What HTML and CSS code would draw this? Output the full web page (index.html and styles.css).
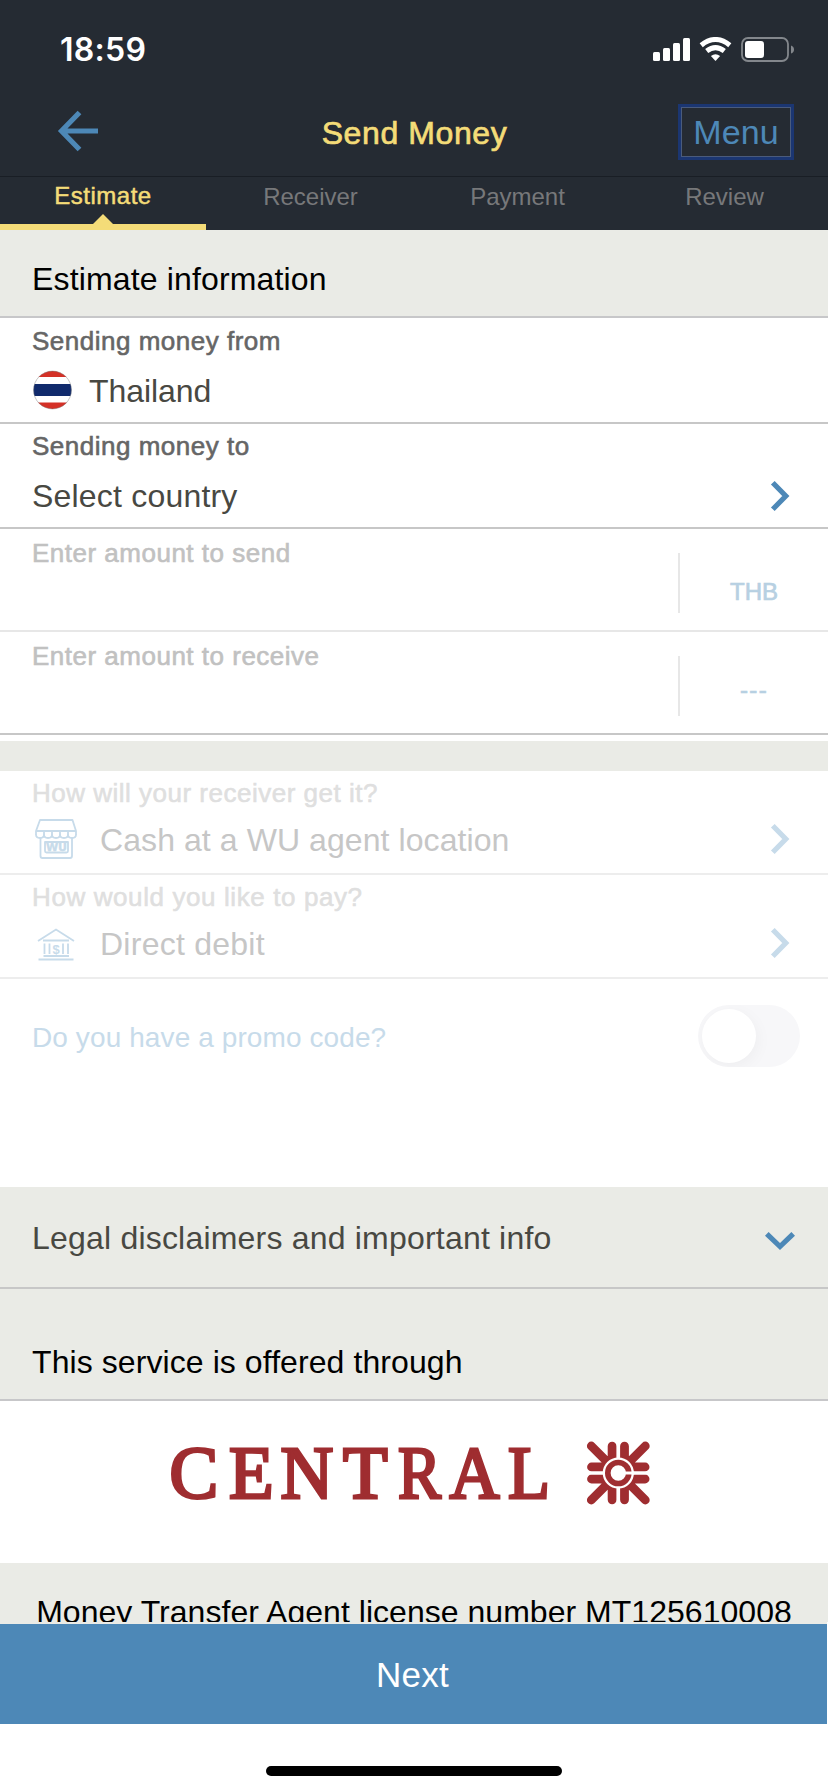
FILE: index.html
```html
<!DOCTYPE html>
<html lang="en">
<head>
<meta charset="utf-8">
<title>Send Money</title>
<link rel="stylesheet" href="styles.css">
</head>
<body>
<div class="screen">
  <header class="header">
    <div class="statusbar">
      <span class="clock">18:59</span>
      <svg class="status-icons" width="142" height="26" viewBox="0 0 142 26">
        <g fill="#fff">
          <rect x="0" y="15" width="7" height="9" rx="1.5"/>
          <rect x="10" y="11" width="7" height="13" rx="1.5"/>
          <rect x="20" y="6" width="7" height="18" rx="1.5"/>
          <rect x="30" y="1" width="7" height="23" rx="1.5"/>
        </g>
        <g fill="none" stroke="#fff" stroke-width="5">
          <path d="M48.200 8.200Q62.500 -3.200 76.800 8.200"/>
          <path d="M53.700 14Q62.500 7.200 71.300 14"/>
        </g>
        <path fill="#fff" d="M57.900 19Q62.500 15.600 67.100 19L62.500 24z"/>
        <rect x="89" y="1" width="46" height="23" rx="6" fill="none" stroke="#83878c" stroke-width="1.8"/>
        <rect x="92" y="4" width="19" height="17" rx="3" fill="#fff"/>
        <path fill="#83878c" d="M138 8.500q3 1 3 4t-3 4z"/>
      </svg>
    </div>
    <div class="navbar">
      <svg class="back" width="42" height="42" viewBox="0 0 42 42"><path d="M22.500 2.500L4.500 21L22.500 39.500M5 21H41" fill="none" stroke="#4d88b7" stroke-width="5.200"/></svg>
      <h1 class="title">Send Money</h1>
      <button class="menu">Menu</button>
    </div>
    <nav class="tabs">
      <span class="tab active">Estimate</span>
      <span class="tab">Receiver</span>
      <span class="tab">Payment</span>
      <span class="tab">Review</span>
    </nav>
  </header>

  <main class="content">
    <h2 class="section">Estimate information</h2>
    <div class="row from">
      <div class="label">Sending money from</div>
      <div class="value">
        <svg class="flag" width="39" height="40" viewBox="0 0 39 40">
          <clipPath id="disc"><circle cx="19.500" cy="20" r="19"/></clipPath>
          <g clip-path="url(#disc)">
            <rect width="39" height="40" fill="#fff"/>
            <rect width="39" height="7" fill="#d43127"/>
            <rect y="14" width="39" height="12" fill="#102a6c"/>
            <rect y="32.500" width="39" height="8" fill="#d43127"/>
          </g>
          <circle cx="19.500" cy="20" r="18.900" fill="none" stroke="#777" stroke-opacity=".55" stroke-width=".8"/>
        </svg>
        <span>Thailand</span>
      </div>
    </div>
    <div class="row to">
      <div class="label">Sending money to</div>
      <div class="value"><span>Select country</span>
        <svg class="chevron" width="20" height="32" viewBox="0 0 20 32"><path d="M2.800 2.800L15.800 16L2.800 29.200"/></svg>
      </div>
    </div>
    <div class="row amount">
      <div class="label">Enter amount to send</div>
      <div class="currency">THB</div>
    </div>
    <div class="row amount last">
      <div class="label">Enter amount to receive</div>
      <div class="currency none">---</div>
    </div>
    <div class="divider"></div>
    <div class="row option">
      <div class="label">How will your receiver get it?</div>
      <div class="value">
        <svg class="icon" width="44" height="42" viewBox="0 0 44 42" fill="none" stroke="#c7dbea" stroke-width="1.800" stroke-linejoin="round">
          <path d="M6 2H38.500L42 13H2zM2 13V17M42 13V17M10 13V17M18 13V17M26 13V17M34 13V17"/>
          <path d="M2 16.500q0 3.500 4 3.500t4-3.500q0 3.500 4 3.500t4-3.500q0 3.500 4 3.500t4-3.500q0 3.500 4 3.500t4-3.500q0 3.500 4 3.500t4-3.500"/>
          <path d="M6.500 20V38q0 2 2 2H36q2 0 2-2V20"/>
          <path d="M11 24H34V33q0 1.500-1.500 1.500H12.500Q11 34.500 11 33z"/>
          <text x="22.500" y="33" text-anchor="middle" class="sign">WU</text>
        </svg>
        <span>Cash at a WU agent location</span>
        <svg class="chevron" width="20" height="32" viewBox="0 0 20 32"><path d="M2.800 2.800L15.800 16L2.800 29.200"/></svg>
      </div>
    </div>
    <div class="row option">
      <div class="label pay">How would you like to pay?</div>
      <div class="value">
        <svg class="icon" width="44" height="42" viewBox="0 0 44 42" fill="none" stroke="#c7dbea" stroke-width="1.800">
          <path d="M4 19L22 7.500L40 19M9 18.500H35M10.500 21.500V32M15.500 21.500V32M29 21.500V32M34 21.500V32M9.500 34H35M4.500 37.500H39.500"/>
          <text x="22.200" y="31.500" text-anchor="middle" class="dollar">$</text>
        </svg>
        <span class="debit">Direct debit</span>
        <svg class="chevron" width="20" height="32" viewBox="0 0 20 32"><path d="M2.800 2.800L15.800 16L2.800 29.200"/></svg>
      </div>
    </div>
    <div class="promo">
      <span>Do you have a promo code?</span>
      <span class="toggle"><span class="knob"></span></span>
    </div>
    <div class="legal">
      <span>Legal disclaimers and important info</span>
      <svg class="chevron" width="32" height="20" viewBox="0 0 32 20"><path d="M2.800 2.800L16 15.500L29.200 2.800"/></svg>
    </div>
    <h2 class="section offered">This service is offered through</h2>
    <div class="partner">
      <svg width="828" height="162" viewBox="0 0 828 162">
        <text class="wordmark" y="96.500"><tspan x="169.500 229 280.500 343">CENT</tspan><tspan x="398" textLength="43" lengthAdjust="spacingAndGlyphs">R</tspan><tspan x="449.500" textLength="50" lengthAdjust="spacingAndGlyphs">A</tspan><tspan x="508" textLength="42" lengthAdjust="spacingAndGlyphs">L</tspan></text>
        <g transform="translate(618.3 72)">
          <g stroke="#9f2d30" stroke-width="8.800" stroke-linecap="round">
            <path d="M-6.200 -26.800V26.800M6.200 -26.800V26.800M-26.800 -6H26.800M-26.800 6H26.800M-27 -27L27 27M27 -27L-27 27"/>
          </g>
          <path d="M0 -31V31M-31 0H31" stroke="#fff" stroke-width="3"/>
          <circle r="15.600" fill="#fff"/>
          <circle r="10.500" fill="none" stroke="#9f2d30" stroke-width="5.600"/>
          <path d="M6 0H16" stroke="#fff" stroke-width="3"/>
        </g>
      </svg>
    </div>
    <div class="license">Money Transfer Agent license number MT125610008</div>
  </main>

  <button class="next">Next</button>
  <footer class="home"><div class="home-bar"></div></footer>
</div>
</body>
</html>
```
FILE: styles.css
```css
* { box-sizing: border-box; }
body {
  margin: 0;
  background: #fff;
  font-family: "Liberation Sans", Arial, sans-serif;
}
button { font-family: inherit; padding: 0; margin: 0; border: 0; background: none; }
h1, h2 { margin: 0; font-weight: 400; }
svg { display: block; flex: none; }

.screen {
  width: 828px;
  height: 1792px;
  display: flex;
  flex-direction: column;
  overflow: hidden;
}

.header { height: 230px; background: #252b33; flex: none; }
.statusbar {
  height: 100px;
  padding: 30px 33px 0 60px;
  display: flex;
  justify-content: space-between;
}
.clock {
  font: 600 32px/40px Inter, sans-serif;
  letter-spacing: .3px;
  color: #fff;
}
.status-icons { margin-top: 7px; }
.navbar {
  height: 77px;
  padding: 4px 34px 0 57px;
  display: grid;
  grid-template-columns: 200px 1fr 200px;
  border-bottom: 1px solid #191e25;
}
.back { margin-top: 6px; }
.title {
  margin-top: 9px;
  font-size: 32px;
  line-height: 40px;
  letter-spacing: .6px;
  color: #f4dc78;
  -webkit-text-stroke: .7px #f4dc78;
  text-align: center;
  padding-right: 22px;
}
.menu {
  justify-self: end;
  width: 116px;
  height: 56px;
  border: 3px solid #1b3672;
  box-shadow: inset 0 0 0 1px #4a5b7c;
  font-size: 34px;
  line-height: 40px;
  letter-spacing: .1px;
  color: #4d88b7;
}
.tabs { display: grid; grid-template-columns: repeat(4, 1fr); height: 53px; }
.tab {
  padding-top: 5px;
  font-size: 24px;
  line-height: 30px;
  color: #77787a;
  text-align: center;
}
.tab.active {
  position: relative;
  margin-right: 1px;
  padding-top: 4px;
  letter-spacing: .5px;
  color: #f4dc78;
  -webkit-text-stroke: .5px #f4dc78;
  border-bottom: 6px solid #f4dc78;
}
.tab.active::after {
  content: "";
  position: absolute;
  left: 93px;
  bottom: 0;
  border: 10px solid transparent;
  border-top: 0;
  border-bottom-color: #f4dc78;
}

.content { height: 1392px; overflow: hidden; background: #eaebe6; flex: none; }
.section {
  height: 88px;
  padding: 29px 32px 0;
  border-bottom: 2px solid #c7c7c9;
  font-size: 32px;
  line-height: 40px;
  letter-spacing: .15px;
  color: #000;
}
.row {
  background: #fff;
  padding: 6px 32px 0;
  border-bottom: 2px solid #c7c7c7;
}
.label {
  font-size: 26px;
  line-height: 32px;
  letter-spacing: .5px;
  color: #666;
  -webkit-text-stroke: .6px currentColor;
}
.value {
  display: flex;
  align-items: center;
  height: 40px;
  margin-top: 14px;
  font-size: 32px;
  line-height: 40px;
  letter-spacing: .2px;
  color: #484842;
}
.from { height: 106px; padding-top: 7px; }
.to { height: 105px; }
.flag { margin: -2px 17px 0 1px; }
.from .value { letter-spacing: -.05px; }
.chevron { margin-left: auto; margin-right: 6px; }
.chevron path { fill: none; stroke: #4d88b7; stroke-width: 5.2; }

.amount {
  height: 103px;
  padding: 8px 0 0 32px;
  display: flex;
  justify-content: space-between;
  border-bottom-color: #e7e7e7;
}
.amount .label { color: #c1c1c1; }
.currency {
  width: 150px;
  height: 60px;
  margin-top: 16px;
  padding-top: 24px;
  border-left: 2px solid #e7e7e7;
  font-size: 24px;
  line-height: 30px;
  text-align: center;
  color: #b7d0e2;
  -webkit-text-stroke: .7px #b7d0e2;
}
.currency.none { padding-top: 19px; letter-spacing: 1.3px; }
.amount.last { border-bottom-color: #c7c7c7; }
.divider { height: 36px; border-top: 6px solid #fff; }

.option { height: 104px; border-bottom-color: #ededed; }
.option .label { color: #dfdfdf; letter-spacing: .5px; }
.option .pay { letter-spacing: .6px; }
.option .value { margin-top: 11px; color: #c6c6c6; letter-spacing: .08px; }
.option .debit { letter-spacing: .25px; }
.option .icon { margin: -3px 22px 0 2px; }
.option .chevron { margin-top: -2px; }
.option .chevron path { stroke: #c7dbea; }
.sign {
  font: bold 11px "DejaVu Sans", sans-serif;
  fill: #c7dbea;
  stroke: #c7dbea;
  stroke-width: .4px;
}
.dollar {
  font: bold 13px "Liberation Sans", sans-serif;
  fill: #c7dbea;
  stroke: none;
}

.promo {
  height: 208px;
  padding: 26px 28px 0 32px;
  display: flex;
  justify-content: space-between;
  align-items: flex-start;
  background: #fff;
  font-size: 28px;
  line-height: 65px;
  letter-spacing: .1px;
  color: #c7dbea;
}
.toggle {
  width: 102px;
  height: 62px;
  padding: 4px;
  border-radius: 31px;
  background: #f7f7f9;
  overflow: hidden;
}
.knob {
  display: block;
  width: 54px;
  height: 54px;
  border-radius: 50%;
  background: #fff;
  box-shadow: 2px 4px 16px rgba(0, 0, 0, .04);
}

.legal {
  height: 102px;
  padding: 31px 32px 0;
  display: flex;
  border-bottom: 2px solid #c7c7c7;
  font-size: 32px;
  line-height: 40px;
  letter-spacing: .2px;
  color: #484842;
}
.legal .chevron { margin: 13px 0 0 auto; }
.offered { height: 112px; padding-top: 53px; letter-spacing: .08px; }
.partner { height: 162px; background: #fff; }
.wordmark {
  font-family: "Liberation Serif", "Times New Roman", serif;
  font-size: 73px;
  fill: #9f2d30;
  stroke: #9f2d30;
  stroke-width: 3px;
}
.license {
  padding-top: 29px;
  font-size: 32px;
  line-height: 40px;
  letter-spacing: .03px;
  text-align: center;
  white-space: nowrap;
  color: #000;
}

.next {
  position: relative;
  width: 827px;
  height: 100px;
  margin-top: 2px;
  background: #4d88b7;
  box-shadow: 0 -2px 0 #eaebe6;
  font-size: 35px;
  line-height: 40px;
  letter-spacing: .3px;
  padding-top: 1px;
  padding-right: 2px;
  color: #fff;
  flex: none;
}
.home { padding-top: 42px; display: flex; justify-content: center; }
.home-bar { width: 296px; height: 10px; border-radius: 5px; background: #000; }
```
